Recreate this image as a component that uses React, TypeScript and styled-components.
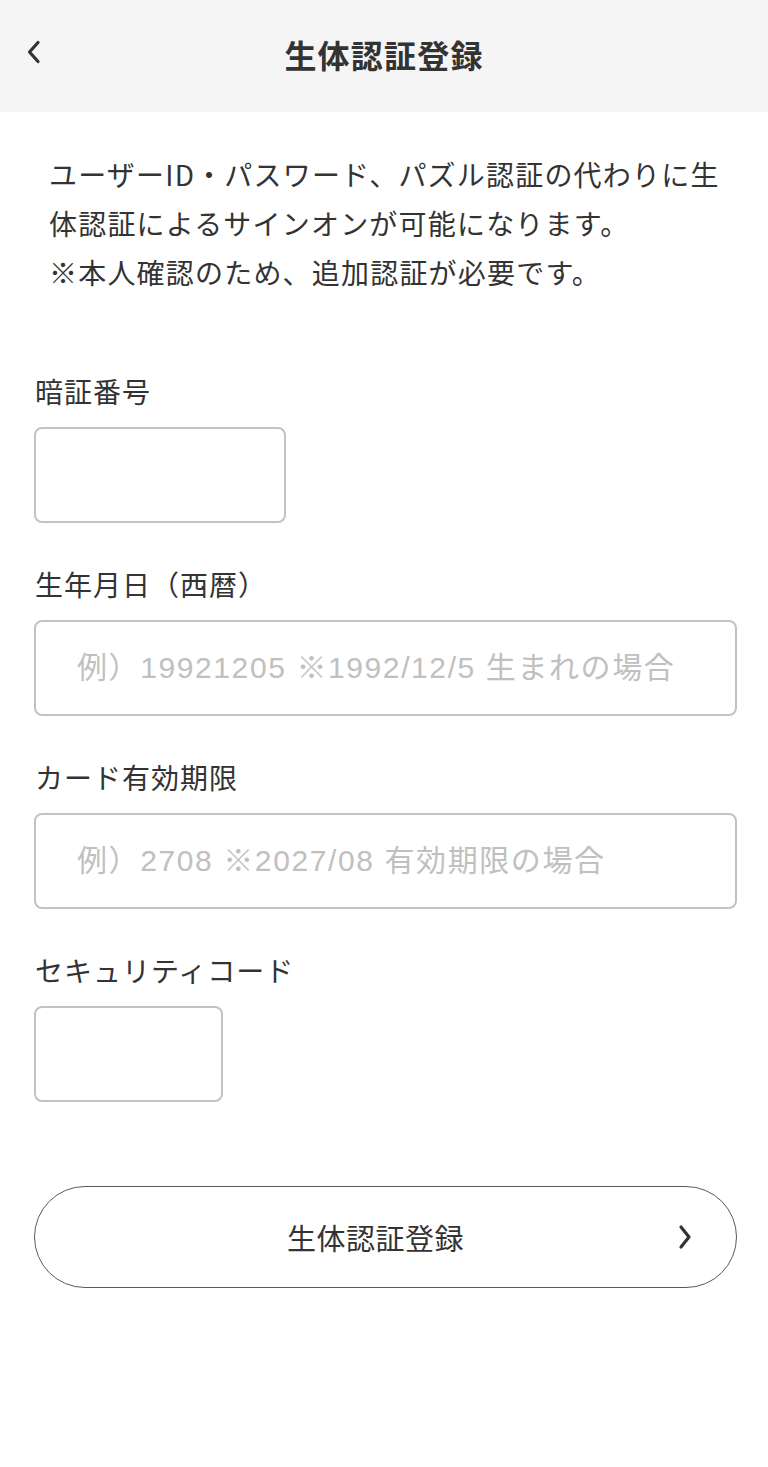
import { FC } from 'react';
import styled, { createGlobalStyle } from 'styled-components';

const GlobalStyle = createGlobalStyle`
  html, body {
    margin: 0;
    padding: 0;
    background: #ffffff;
  }
  body {
    font-family: "Noto Sans CJK JP", "Noto Sans", sans-serif;
    color: #333333;
  }
  * {
    box-sizing: border-box;
  }
`;

interface FieldProps {
  label: string;
  placeholder?: string;
  width?: number; // 입력칸 너비 (없으면 전체)
}

const Field: FC<FieldProps> = ({ label, placeholder, width }) => {
  return (
    <FieldWrap>
      <Label>{label}</Label>
      <Input $width={width} placeholder={placeholder} />
    </FieldWrap>
  );
};

const App: FC = () => {
  return (
    <>
      <GlobalStyle />
      <Page>
        <Header>
          <BackButton aria-label="戻る">
            <svg width="16" height="24" viewBox="0 0 16 24" fill="none">
              <path
                d="M12 2.5 L3.5 12 L12 21.5"
                stroke="#333"
                strokeWidth="3.2"
                strokeLinecap="round"
                strokeLinejoin="round"
              />
            </svg>
          </BackButton>
          <Title>生体認証登録</Title>
        </Header>

        <Intro>
          ユーザーID・パスワード、パズル認証の代わりに生
          <br />
          体認証によるサインオンが可能になります。
          <br />
          ※本人確認のため、追加認証が必要です。
        </Intro>

        <Form>
          <Field label="暗証番号" width={252} />
          <Field
            label="生年月日（西暦）"
            placeholder="例）19921205 ※1992/12/5 生まれの場合"
          />
          <Field
            label="カード有効期限"
            placeholder="例）2708 ※2027/08 有効期限の場合"
          />
          <Field label="セキュリティコード" width={189} />

          <SubmitButton type="button">
            <span>生体認証登録</span>
            <Chevron width="16" height="26" viewBox="0 0 16 26" fill="none">
              <path
                d="M4 3 L12 13 L4 23"
                stroke="#333"
                strokeWidth="3.2"
                strokeLinecap="round"
                strokeLinejoin="round"
              />
            </Chevron>
          </SubmitButton>
        </Form>
      </Page>
    </>
  );
};

export default App;

const Page = styled.div`
  width: 768px;
  min-height: 1467px;
  background: #ffffff;
`;

const Header = styled.header`
  position: relative;
  height: 112px;
  background: #f5f5f5;
  display: flex;
  align-items: center;
  justify-content: center;
`;

const BackButton = styled.button`
  position: absolute;
  left: 23px;
  top: 38px;
  width: 22px;
  height: 28px;
  padding: 0;
  border: none;
  background: transparent;
  display: flex;
  align-items: center;
  justify-content: center;
`;

const Title = styled.h1`
  margin: 0;
  font-size: 32px;
  font-weight: 700;
  color: #333;
  letter-spacing: 1.2px;
  transform: translateY(-2px);
`;

const Intro = styled.p`
  margin: 0;
  padding: 38px 20px 0 49px;
  font-size: 28px;
  line-height: 49px;
  letter-spacing: 1.2px;
  color: #333;
  white-space: nowrap;
`;

const Form = styled.div`
  padding: 74px 31px 0 34px;
  display: flex;
  flex-direction: column;
`;

const FieldWrap = styled.div`
  display: flex;
  flex-direction: column;
  margin-bottom: 41px;
`;

const Label = styled.div`
  height: 40px;
  line-height: 40px;
  font-size: 28px;
  letter-spacing: 1px;
  color: #333;
  margin-bottom: 16px;
  padding-left: 1px;
`;

const Input = styled.input<{ $width?: number }>`
  width: ${({ $width }) => ($width ? `${$width}px` : '100%')};
  height: 96px;
  border: 2px solid #c2c2c2;
  border-radius: 8px;
  padding: 0 0 0 41px;
  font-family: "Liberation Sans", "Noto Sans CJK JP", sans-serif;
  font-size: 30px;
  letter-spacing: 1.6px;
  color: #333;
  background: #fff;
  outline: none;

  &::placeholder {
    color: #c0c0c0;
  }
`;

const SubmitButton = styled.button`
  position: relative;
  margin-top: 43px;
  width: 100%;
  height: 102px;
  padding: 0 20px 0 0;
  border: 1.5px solid #5a5a5a;
  border-radius: 51px;
  background: #fff;
  display: flex;
  align-items: center;
  justify-content: center;
  font-family: "Noto Sans CJK JP", "Noto Sans", sans-serif;
  font-size: 29px;
  color: #333;
  cursor: pointer;

  span {
    letter-spacing: 0.5px;
  }
`;

const Chevron = styled.svg`
  position: absolute;
  right: 43px;
  top: 50%;
  transform: translateY(-50%);
`;
